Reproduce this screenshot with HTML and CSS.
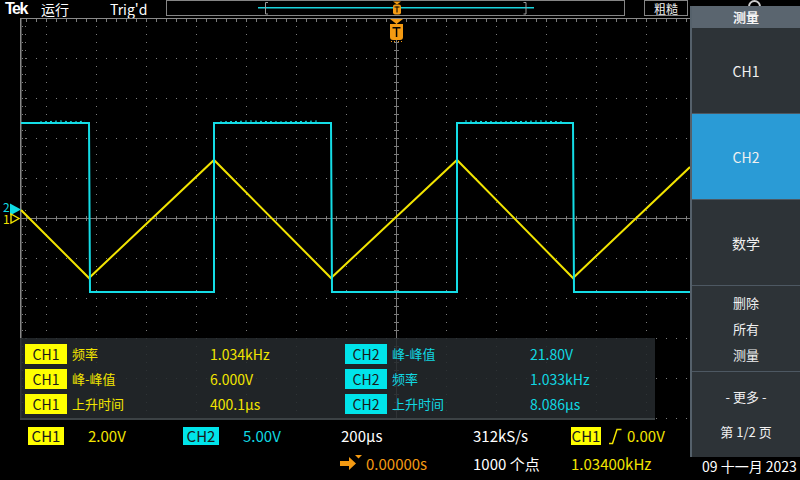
FILE: index.html
```html
<!DOCTYPE html>
<html lang="zh">
<head>
<meta charset="utf-8">
<title>Tek Scope</title>
<link rel="stylesheet" href="styles.css">
</head>
<body>
<div class="screen">
  <header class="topbar">
    <div class="logo">Tek</div>
    <div class="run">运行</div>
    <div class="trig">Trig'd</div>
    <div class="recbox">
      <svg width="457" height="14" viewBox="0 0 457 14">
        <rect x="91" y="6" width="276" height="1.5" fill="#19d3dc"/>
        <polyline points="101,1.5 98.5,1.5 98.5,13 101,13" fill="none" stroke="#9a9a9a" stroke-width="1"/>
        <polyline points="356.5,1.5 359,1.5 359,13 356.5,13" fill="none" stroke="#9a9a9a" stroke-width="1"/>
        <polygon points="226,0.5 234,0.5 230,3.5" fill="#f49a12"/>
        <rect x="226" y="3.5" width="8" height="10" rx="2" fill="#f49a12"/>
        <rect x="227.5" y="5.5" width="5" height="1" fill="#000"/>
        <rect x="229.5" y="5.5" width="1" height="6" fill="#000"/>
      </svg>
    </div>
    <div class="coarse">粗糙</div>
    <div class="hidden-info"><span class="ring"></span></div>
  </header>

  <main class="scope">
    <svg class="grat" width="690" height="402" viewBox="0 18 690 402">
      <defs>
        <pattern id="vd" x="46" y="18" width="50" height="8" patternUnits="userSpaceOnUse"><rect width="1" height="1" fill="#7c7c7c"/></pattern>
        <pattern id="hd" x="6" y="18" width="10" height="40" patternUnits="userSpaceOnUse"><rect width="1" height="1" fill="#7c7c7c"/></pattern>
        <pattern id="tt" x="6" y="19" width="10" height="3" patternUnits="userSpaceOnUse"><rect width="1" height="3" fill="#7c7c7c"/></pattern>
        <pattern id="lt" x="21" y="18" width="6" height="8" patternUnits="userSpaceOnUse"><rect x="1" width="1" height="1" fill="#7c7c7c"/><rect x="4" width="1" height="1" fill="#7c7c7c"/></pattern>
        <pattern id="ht" x="6" y="216" width="10" height="5" patternUnits="userSpaceOnUse"><rect width="1" height="5" fill="#7c7c7c"/></pattern>
        <pattern id="vt" x="394" y="18" width="5" height="8" patternUnits="userSpaceOnUse"><rect width="5" height="1" fill="#7c7c7c"/></pattern>
      </defs>
      <rect x="21" y="19" width="669" height="401" fill="url(#vd)"/>
      <rect x="21" y="19" width="669" height="401" fill="url(#hd)"/>
      <rect x="21" y="19" width="669" height="3" fill="url(#tt)"/>
      <rect x="21" y="19" width="6" height="401" fill="url(#lt)"/>
      <rect x="21" y="216" width="669" height="5" fill="url(#ht)"/>
      <rect x="394" y="19" width="5" height="401" fill="url(#vt)"/>
      <rect x="20" y="18" width="670" height="1" fill="#8a8a8a"/>
      <rect x="20" y="18" width="1.5" height="402" fill="#8a8a8a"/>
      <rect x="21" y="218" width="669" height="1" fill="#7a7a7a"/>
      <rect x="396" y="19" width="1" height="401" fill="#7a7a7a"/>

      <polyline class="w1" points="21,210 89,278 214,160 331,278 457,160 573,278 690,167"/>
      <polyline class="w2" points="21,123 89,123 90,292 214,292 214,123 331,123 332,292 457,292 457,123 573,123 574,292 690,292"/>
      <polyline class="w2n" points="40,122 60,121 75,122 85,121"/>
      <polyline class="w2n" points="220,122 250,121 280,122 320,121"/>
      <polyline class="w2n" points="465,121 500,122 540,121 565,122"/>

      <text class="mk2" x="3" y="212">2</text>
      <polygon points="10,203.5 21,209.5 10,215.5" fill="#10dce4"/>
      <text class="mk1" x="3" y="224">1</text>
      <polygon points="11,214 19,218.5 11,223" fill="none" stroke="#f2e400" stroke-width="1.4"/>

      <polygon points="390,19 403,19 396.5,24" fill="#f49a12"/>
      <path d="M390 24 H403 V37 Q403 40 400 40 H393 Q390 40 390 37 Z" fill="#f49a12"/>
      <rect x="392.5" y="27" width="8" height="1.5" fill="#000"/>
      <rect x="395.8" y="27" width="1.5" height="10" fill="#000"/>
      <rect x="391" y="41" width="1" height="1" fill="#f49a12"/>
      <rect x="394" y="41" width="1" height="1" fill="#f49a12"/>
      <rect x="398" y="41" width="1" height="1" fill="#f49a12"/>
      <rect x="401" y="41" width="1" height="1" fill="#f49a12"/>
    </svg>

    <section class="meas">
      <div class="badge b1">CH1</div><div class="lbl y">频率</div><div class="val y">1.034kHz</div>
      <div class="badge b2">CH2</div><div class="lbl c">峰-峰值</div><div class="val c">21.80V</div>
      <div class="badge b1">CH1</div><div class="lbl y">峰-峰值</div><div class="val y">6.000V</div>
      <div class="badge b2">CH2</div><div class="lbl c">频率</div><div class="val c">1.033kHz</div>
      <div class="badge b1">CH1</div><div class="lbl y">上升时间</div><div class="val y">400.1µs</div>
      <div class="badge b2">CH2</div><div class="lbl c">上升时间</div><div class="val c">8.086µs</div>
    </section>
  </main>

  <footer class="bottombar">
    <div class="chip cy1">CH1</div>
    <div class="y">2.00V</div>
    <div class="chip cc2">CH2</div>
    <div class="c">5.00V</div>
    <div>200µs</div>
    <div>312kS/s</div>
    <div class="trigset">
      <span class="chip cy1 small">CH1</span>
      <svg class="edge" width="13" height="17" viewBox="0 0 13 17"><polyline points="0,15.5 3.5,15.5 8,1.5 12.5,1.5" fill="none" stroke="#f2e400" stroke-width="1.5"/></svg>
      <span class="y">0.00V</span>
    </div>
    <div></div>

    <div></div><div></div><div></div><div></div>
    <div class="pos">
      <svg width="25" height="18" viewBox="0 0 25 18"><polygon points="0,6 9,6 9,2 16,8.5 9,15 9,11 0,11" fill="#f49a12"/><polygon points="15,0 22,0 18.5,3.5" fill="#f49a12"/></svg>
      <span class="o">0.00000s</span>
    </div>
    <div>1000 个点</div>
    <div class="y">1.03400kHz</div>
    <div class="date">09 十一月 2023</div>
  </footer>

  <nav class="menu">
    <div class="mtitle">测量</div>
    <div class="mitem">CH1</div>
    <div class="mitem sel">CH2</div>
    <div class="mitem">数学</div>
    <div class="mitem multi"><span>删除</span><span>所有</span><span>测量</span></div>
    <div class="mitem more"><span>- 更多 -</span><span>第 1/2 页</span></div>
  </nav>
</div>
</body>
</html>
```

FILE: styles.css
```css
* { box-sizing: border-box; }

body {
  margin: 0;
  background: #000;
  color: #fff;
  font-family: "Noto Sans CJK SC", "Noto Sans", sans-serif;
}

.screen {
  width: 800px;
  height: 480px;
  position: relative;
  overflow: hidden;
  display: flex;
  flex-direction: column;
  background: #000;
}

/* top bar */
.topbar {
  height: 18px;
  flex: none;
  display: flex;
  align-items: flex-start;
}
.logo {
  width: 41px;
  padding-left: 5px;
  font: bold 16px/18px "Liberation Sans", Arial, sans-serif;
  letter-spacing: -1.5px;
  color: #fff;
}
.run {
  width: 69px;
  font-size: 14px;
  line-height: 18px;
}
.trig {
  width: 56px;
  font-size: 14px;
  line-height: 18px;
  white-space: nowrap;
}
.recbox {
  width: 459px;
  height: 16px;
  border: 1px solid #858585;
  margin-right: 19px;
}
.recbox svg { display: block; }
.coarse {
  width: 44px;
  height: 16px;
  border: 1px solid #858585;
  font-size: 12px;
  line-height: 15px;
  text-align: center;
  color: #f0f0f0;
  white-space: nowrap;
}
.hidden-info {
  margin-left: 60px;
  display: flex;
  align-items: flex-start;
}
.ring {
  width: 13px;
  height: 13px;
  border: 2px solid #ccc;
  border-radius: 50%;
}

/* scope area */
.scope {
  height: 402px;
  flex: none;
  position: relative;
}
.grat { display: block; }
.grat text {
  font-family: "Noto Sans CJK SC", "Noto Sans", sans-serif;
  font-size: 12px;
}
.mk2 { fill: #10dce4; }
.mk1 { fill: #f2e400; }
.w1 {
  fill: none;
  stroke: #f2e400;
  stroke-width: 2;
  stroke-linejoin: miter;
}
.w2 {
  fill: none;
  stroke: #14dde6;
  stroke-width: 2;
  stroke-linejoin: miter;
}
.w2n {
  fill: none;
  stroke: #14dde6;
  stroke-width: 1;
  stroke-dasharray: 2 3;
}

/* measurement overlay */
.meas {
  position: absolute;
  left: 20px;
  top: 320px;
  width: 635px;
  height: 82px;
  background: rgba(36, 41, 44, 0.88);
  border-bottom: 2px solid #3c4245;
  padding: 6px 0 0 5px;
  display: grid;
  grid-template-columns: 42px 143px 135px 42px 143px 1fr;
  grid-auto-rows: 20px;
  row-gap: 5px;
  align-items: center;
}
.badge {
  height: 20px;
  line-height: 20px;
  text-align: center;
  font-size: 14px;
  color: #1a1a1a;
}
.b1 { background: #ffff00; }
.b2 { background: #00e4ea; }
.lbl {
  padding-left: 5px;
  font-size: 13px;
  line-height: 20px;
}
.val {
  font-size: 14px;
  line-height: 20px;
}
.y { color: #f2e400; }
.c { color: #10d8e2; }
.o { color: #f49a12; }

/* bottom bar */
.bottombar {
  height: 60px;
  flex: none;
  display: grid;
  grid-template-columns: 60px 95px 60px 98px 132px 98px 131px 1fr;
  grid-template-rows: 18px 18px;
  row-gap: 10px;
  padding: 7px 0 0 28px;
  font-size: 15px;
  line-height: 18px;
  align-items: center;
  color: #fff;
  white-space: nowrap;
}
.chip {
  width: 36px;
  height: 18px;
  line-height: 18px;
  text-align: center;
  color: #1a1a1a;
}
.chip.small { width: 30px; display: inline-block; }
.cy1 { background: #ffff00; }
.cc2 { background: #00e4ea; }
.trigset {
  display: flex;
  align-items: center;
}
.edge { margin-left: 8px; margin-right: 5px; display: block; }
.pos {
  display: flex;
  align-items: center;
  margin-left: -1px;
  gap: 1px;
}
.pos svg { display: block; }
.date {
  color: #fff;
  font-size: 14px;
  margin-top: 3px;
}

/* side menu */
.menu {
  position: absolute;
  top: 6px;
  right: 0;
  width: 110px;
  height: 451px;
  display: flex;
  flex-direction: column;
  background: #2d3337;
  border-left: 2px solid #55616b;
}
.mtitle {
  height: 22px;
  flex: none;
  background: #5a656f;
  text-align: center;
  font-size: 13px;
  font-weight: bold;
  line-height: 22px;
  color: #f4f4f4;
}
.mitem {
  flex: 1;
  display: flex;
  flex-direction: column;
  align-items: center;
  justify-content: center;
  font-size: 14px;
  color: #f0f0f0;
}
.mitem + .mitem { border-top: 1px solid #4d5862; }
.sel { background: #2a9bd6; }
.multi {
  font-size: 13px;
  line-height: 26px;
}
.more {
  font-size: 13px;
  line-height: 18px;
  gap: 17px;
}
```
